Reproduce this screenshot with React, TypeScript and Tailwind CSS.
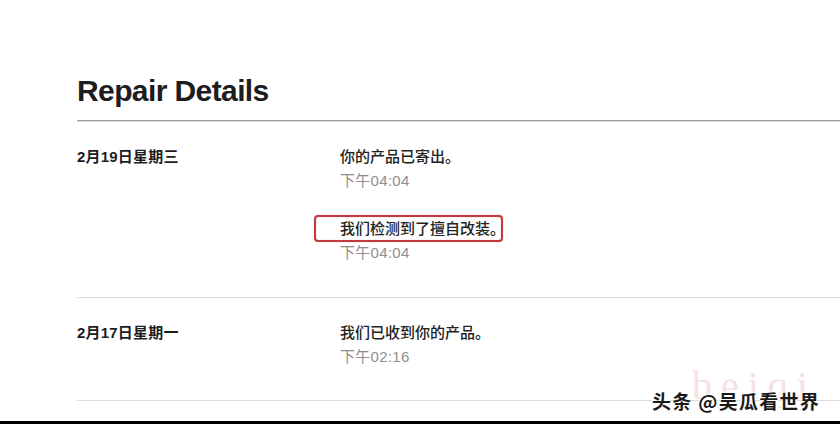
import React from "react";

function Row({
  date,
  events,
  pt,
  pb,
}: {
  date: string;
  events: { text: string; time: string; boxed?: boolean }[];
  pt: string;
  pb: string;
}) {
  return (
    <div className={`grid grid-cols-[263px_1fr] ${pt} ${pb}`}>
      <div className="text-[15px] leading-[24px] font-semibold tracking-[0.2px] text-[#1d1d1f]">{date}</div>
      <div className="flex flex-col gap-[24px]">
        {events.map((e, i) => (
          <div key={i} className="flex flex-col">
            <div className="leading-[24px] text-[15px] font-medium text-[#222222]">
              <span className="relative inline-block">
                {e.text}
                {e.boxed && (
                  <span className="absolute left-[-26px] top-[-2px] w-[189px] h-[27px] border-2 border-[#c23a3c] rounded-[4px] shadow-[0_0_1px_#e89a9a,inset_0_0_1px_#e89a9a]" />
                )}
              </span>
            </div>
            <div className="leading-[24px] text-[15px] text-[#8e8e8e] tracking-[0.3px]">{e.time}</div>
          </div>
        ))}
      </div>
    </div>
  );
}

export default function App() {
  return (
    <div className="w-[840px] h-[424px] bg-white relative overflow-hidden flex flex-col font-['Liberation_Sans','Noto_Sans_CJK_SC',sans-serif]">
      <div className="flex-1 pl-[77px] pt-[73px]">
        <h1 className="text-[30px] leading-[36px] font-bold tracking-[-0.6px] text-[#1d1d1f]">Repair Details</h1>
        <div className="mt-[11px] h-px bg-[#9c9c9c]" />
        <div className="h-px bg-[#dedede]" />
        <Row
          date="2月19日星期三"
          pt="pt-[23px]"
          pb="pb-[32px]"
          events={[
            { text: "你的产品已寄出。", time: "下午04:04" },
            { text: "我们检测到了擅自改装。", time: "下午04:04", boxed: true },
          ]}
        />
        <div className="h-px bg-[#dcdcdc]" />
        <Row
          date="2月17日星期一"
          pt="pt-[23px]"
          pb="pb-[31px]"
          events={[{ text: "我们已收到你的产品。", time: "下午02:16" }]}
        />
        <div className="h-px bg-[#dcdcdc]" />
      </div>
      <div className="h-[3px] bg-black" />

      <div className="absolute left-[692px] top-[362px] text-[40px] leading-[48px] tracking-[9px] text-[#f5e0e6] font-['Liberation_Serif',serif]">
        beiqi
      </div>
      <div className="absolute left-[652px] top-[389px] text-[19px] leading-[24px] tracking-[1.3px] font-semibold text-[#1a1a1a] font-['Noto_Sans_CJK_SC',sans-serif] [text-shadow:0_0_2px_#fff,1px_1px_1px_#fff,-1px_-1px_1px_#fff]">
        头条 @吴瓜看世界
      </div>
    </div>
  );
}
